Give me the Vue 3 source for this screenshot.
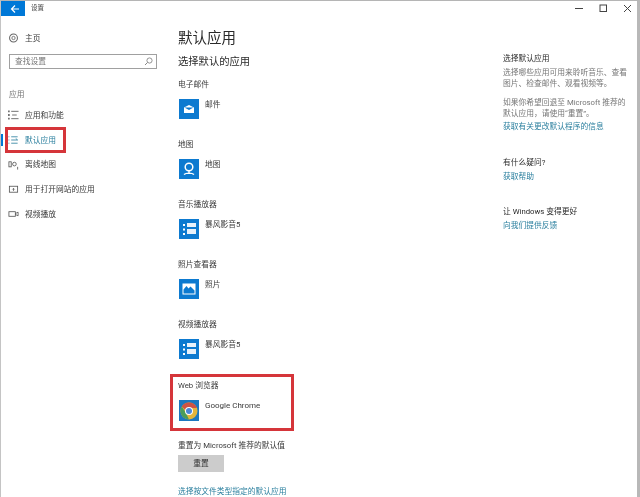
<script setup>
const navItems = [
  { label: '应用和功能', icon: 'list' },
  { label: '默认应用', icon: 'defaults', active: true },
  { label: '离线地图', icon: 'map' },
  { label: '用于打开网站的应用', icon: 'site' },
  { label: '视频播放', icon: 'video' },
]
const groups = [
  { title: '电子邮件', app: '邮件', icon: 'mail' },
  { title: '地图', app: '地图', icon: 'pin' },
  { title: '音乐播放器', app: '暴风影音5', icon: 'storm' },
  { title: '照片查看器', app: '照片', icon: 'photo' },
  { title: '视频播放器', app: '暴风影音5', icon: 'storm' },
]
</script>

<template>
  <div class="window">
    <header class="titlebar">
      <button class="back" aria-label="返回">
        <svg width="10" height="10" viewBox="0 0 10 10"><path d="M9 5H1.5M5 1.5 1.5 5 5 8.5" fill="none" stroke="#fff" stroke-width="1.2"/></svg>
      </button>
      <span class="wintitle">设置</span>
      <div class="controls">
        <svg width="9" height="9" viewBox="0 0 9 9"><path d="M0 4.5h8" stroke="#444" stroke-width="1"/></svg>
        <svg width="9" height="9" viewBox="0 0 9 9"><rect x="1" y="1" width="6.5" height="6.5" fill="none" stroke="#444"/></svg>
        <svg width="9" height="9" viewBox="0 0 9 9"><path d="M1 1l7 7M8 1 1 8" stroke="#444"/></svg>
      </div>
    </header>

    <div class="body">
      <aside class="sidebar">
        <div class="home">
          <svg class="nav-icon" width="11" height="12" viewBox="0 0 12 12"><circle cx="6" cy="6" r="4.3" fill="none" stroke="#666" stroke-width="1.1"/><circle cx="6" cy="6" r="1.8" fill="none" stroke="#666" stroke-width=".9"/></svg>
          <span>主页</span>
        </div>
        <div class="search">
          <span>查找设置</span>
          <svg width="9" height="9" viewBox="0 0 9 9"><circle cx="5.5" cy="3.5" r="2.6" fill="none" stroke="#888" stroke-width=".9"/><path d="M3.6 5.4 1 8" stroke="#888"/></svg>
        </div>
        <div class="section">应用</div>
        <nav>
          <div v-for="item in navItems" :key="item.label" class="nav-item" :class="{ active: item.active }">
            <svg class="nav-icon" width="11" height="12" viewBox="0 0 12 12" fill="none" stroke-width=".9" :stroke="item.active ? '#2a7f9e' : '#555'">
              <template v-if="item.icon === 'list'">
                <path d="M3.500 2h8M4.500 6h5M3.500 10h8" /><path d="M1 1v2M1 5v2M1 9v2" stroke-width="1.300" stroke="#333"/>
              </template>
              <template v-else-if="item.icon === 'defaults'">
                <path d="M3.500 2.500h7M3.500 6h7l-2-1.600M3.500 9.500h7"/><path d="M1 2v1M1 5.500v1M1 9v1"/>
              </template>
              <template v-else-if="item.icon === 'map'">
                <rect x="1" y="2.500" width="2.500" height="5.500"/><circle cx="7" cy="5" r="2"/><path d="M10.500 8v3"/>
              </template>
              <template v-else-if="item.icon === 'site'">
                <rect x="1.500" y="3" width="9" height="6.500"/><path d="M6 8V5.500M4.800 6.500 6 5.300 7.200 6.500"/>
              </template>
              <template v-else>
                <rect x="1" y="3.500" width="7" height="5"/><path d="M8 5.500 11 4v4L8 6.500"/>
              </template>
            </svg>
            <span>{{ item.label }}</span>
            <i v-if="item.active" class="marker"></i>
            <i v-if="item.active" class="red-box nav-box"></i>
          </div>
        </nav>
      </aside>

      <main class="main">
        <h1>默认应用</h1>
        <h2>选择默认的应用</h2>
        <section v-for="g in groups" :key="g.title" class="group">
          <div class="label">{{ g.title }}</div>
          <div class="app">
            <svg class="tile" width="20" height="20" viewBox="0 0 20 20">
              <rect width="20" height="20" fill="#0d7ad0"/>
              <template v-if="g.icon === 'mail'">
                <path d="M5 8.500 10 6l5 2.500V14H5z" fill="#fff"/>
                <path d="M5.500 8.500h9L10 11z" fill="#0d7ad0"/>
              </template>
              <template v-else-if="g.icon === 'pin'">
                <circle cx="10" cy="8" r="3.800" fill="none" stroke="#fff" stroke-width="1.500"/>
                <path d="M10 12v3M5 15.500c2-1.800 8-1.800 10 0" fill="none" stroke="#fff" stroke-width="1.400"/>
              </template>
              <template v-else-if="g.icon === 'storm'">
                <path d="M8 4h9v4H8zM8 10h9v5H8z" fill="#e8f2fb"/>
                <path d="M4 5h2v2H4zM4 9.500h2v2H4zM4 14h2v2H4z" fill="#fff"/>
              </template>
              <template v-else>
                <rect x="3.500" y="4.500" width="13" height="11" fill="#fff"/>
                <path d="M4.500 14.500v-4l3-3.500 2 2.500 2-2 4 4v3z" fill="#0d7ad0"/>
              </template>
            </svg>
            <span>{{ g.app }}</span>
          </div>
        </section>

        <section class="group web">
          <i class="red-box web-box"></i>
          <div class="label">Web 浏览器</div>
          <div class="app">
            <svg class="tile" width="20" height="21" viewBox="0 0 20 21">
              <rect width="20" height="21" fill="#1c78c0"/>
              <circle cx="10" cy="11" r="8.500" fill="#e3b53c"/>
              <path d="M2.800 6.500A8.500 8.500 0 0 1 18 8H10a3.500 3.500 0 0 0-3.300 2.300z" fill="#cf5244"/>
              <path d="M2.800 6.500 6.700 12.500 10 19.500A8.500 8.500 0 0 1 2.800 6.500z" fill="#4a9c5c"/>
              <circle cx="10" cy="11" r="4" fill="#fff"/>
              <circle cx="10" cy="11" r="3" fill="#4a86d8"/>
            </svg>
            <span class="chrome-name">Google Chrome</span>
          </div>
        </section>

        <div class="reset-label">重置为 Microsoft 推荐的默认值</div>
        <button class="reset">重置</button>
        <a class="link filetype">选择按文件类型指定的默认应用</a>
      </main>

      <aside class="help">
        <div class="help-title">选择默认应用</div>
        <p>选择哪些应用可用来聆听音乐、查看图片、检查邮件、观看视频等。</p>
        <p class="second">如果你希望回退至 Microsoft 推荐的默认应用，请使用“重置”。</p>
        <a class="link first-link">获取有关更改默认程序的信息</a>
        <div class="help-title block q">有什么疑问?</div>
        <a class="link">获取帮助</a>
        <div class="help-title block">让 Windows 变得更好</div>
        <a class="link">向我们提供反馈</a>
      </aside>
    </div>
  </div>
</template>

<style scoped>
.window {
  width: 640px;
  height: 497px;
  box-sizing: border-box;
  overflow: hidden;
  background: #fff;
  border-top: 1px solid #b5b5b5;
  border-left: 1px solid #c4c4c4;
  border-right: 3px solid #b8b8b8;
  font-family: Roboto, "Noto Sans CJK SC", sans-serif;
  font-size: 7.750px;
  line-height: 11px;
  color: #3a3a3a;
  filter: blur(0.4px);
}
.titlebar {
  height: 15px;
  display: flex;
  align-items: center;
}
.back {
  width: 24px;
  height: 15px;
  border: 0;
  padding: 0 0 0 3px;
  background: #0078d7;
  display: flex;
  align-items: center;
  justify-content: center;
}
.wintitle {
  margin-left: 6px;
  font-size: 6.500px;
}
.controls {
  margin-left: auto;
  margin-right: 5px;
  display: flex;
  gap: 15px;
}
.body {
  display: grid;
  grid-template-columns: 177px 325px 1fr;
}
.sidebar {
  padding-top: 16px;
}
.home {
  height: 12px;
  display: flex;
  align-items: center;
}
.nav-icon {
  margin-left: 7px;
  margin-right: 6px;
  flex: none;
}
.search {
  margin: 10px 0 0 8px;
  width: 148px;
  height: 15px;
  box-sizing: border-box;
  border: 1px solid #a0a0a0;
  padding: 0 3px 0 5px;
  display: flex;
  align-items: center;
  justify-content: space-between;
  color: #777;
}
.section {
  margin: 20px 0 0 8px;
  color: #777;
}
nav {
  margin-top: 3px;
}
.nav-item {
  position: relative;
  height: 24.700px;
  display: flex;
  align-items: center;
}
.nav-item.active {
  color: #2a7f9e;
}
.marker {
  position: absolute;
  left: -1px;
  top: 6px;
  width: 3px;
  height: 12px;
  background: #0078d7;
}
.red-box {
  position: absolute;
  box-sizing: border-box;
  border: 3px solid #d5353a;
  pointer-events: none;
}
.nav-box {
  left: 4px;
  top: -1px;
  width: 61px;
  height: 26px;
}
.main {
  padding-top: 14px;
}
h1 {
  margin: 0;
  font-size: 14.500px;
  line-height: 18px;
  font-weight: 400;
  color: #2a2a2a;
}
h2 {
  margin: 7px 0 0;
  font-size: 10.300px;
  line-height: 14px;
  font-weight: 400;
  color: #2a2a2a;
}
.group {
  height: 60px;
}
.group:first-of-type {
  margin-top: 10px;
}
.label {
  height: 11px;
}
.app {
  margin: 9px 0 0 1px;
  display: flex;
  align-items: flex-start;
  gap: 6px;
}
.tile {
  flex: none;
}
.chrome-name {
  font-size: 8px;
}
.web {
  position: relative;
  box-sizing: border-box;
  padding-top: 1px;
}
.web-box {
  left: -8px;
  top: -5px;
  width: 124px;
  height: 57px;
}
.reset-label {
  margin-top: 1px;
}
.reset {
  display: block;
  margin: 4px 0 0;
  width: 46px;
  height: 17px;
  border: 0;
  padding: 0;
  background: #cccccc;
  font: inherit;
  color: #333;
}
.link {
  color: #2a7f9e;
  display: block;
}
.filetype {
  margin-top: 14px;
}
.help {
  padding-top: 37px;
}
.help p {
  margin: 3px 0 0;
  width: 130px;
  color: #777;
}
.help p.second {
  margin-top: 8px;
}
.help .link {
  margin-top: 3px;
}
.help .first-link {
  margin-top: 2px;
}
.help-title {
  color: #2a2a2a;
}
.block {
  margin-top: 24px;
}
.q {
  margin-top: 25px;
}
</style>
